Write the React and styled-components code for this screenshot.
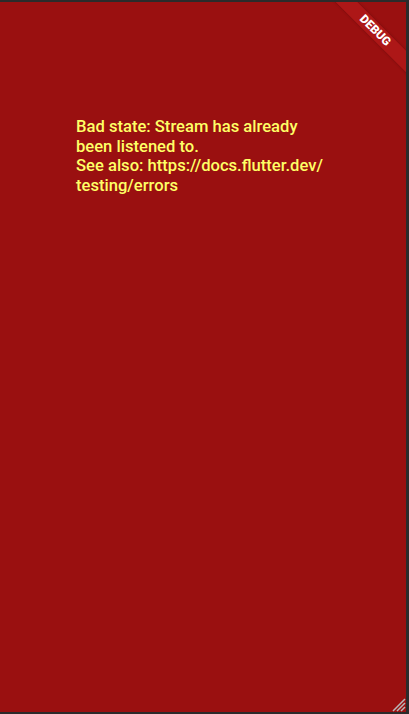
import React from 'react'
import styled, { createGlobalStyle } from 'styled-components'

const Global = createGlobalStyle`
html, body {
    margin: 0;
    padding: 0;
    background: #2b2b2b;
}
`

const Frame = styled.div`
width: 409px;
height: 714px;
box-sizing: border-box;
padding: 2px 3px 2px 0;
background: #2b2b2b;
position: relative;
overflow: hidden;
`

const Screen = styled.div`
position: relative;
height: 100%;
background: #9a1010;
overflow: hidden;
padding: 115px 0 0 76px;
box-sizing: border-box;
`

const Message = styled.p`
margin: 0;
width: 252px;
font-family: Roboto, "Liberation Sans", sans-serif;
font-size: 16.6px;
font-weight: 500;
line-height: 19.5px;
color: #ffff66;
`

const Ribbon = styled.div`
position: absolute;
top: 21px;
right: -29px;
width: 120px;
height: 15px;
transform: rotate(45deg);
background: rgba(183, 28, 28, 0.63);
box-shadow: 0 0 3px rgba(0, 0, 0, 0.3);
display: flex;
align-items: center;
justify-content: center;
font-family: Roboto, "Liberation Sans", sans-serif;
font-size: 12px;
font-weight: 900;
color: #fff;
line-height: 15px;
`

const Grip = styled.svg`
position: absolute;
right: 3px;
bottom: 2px;
`

const App = () => {
    return (
        <>
            <Global />
            <Frame>
                <Screen>
                    <Message>
                        Bad state: Stream has already been listened to.
                        <br />
                        See also: https://docs.flutter.dev/ testing/errors
                    </Message>
                    <Ribbon>DEBUG</Ribbon>
                </Screen>
                <Grip width="14" height="14" viewBox="0 0 14 14">
                    <path d="M13 1 L1 13 M13 5 L5 13 M13 9 L9 13" stroke="#b8b8b8" strokeWidth="1.5" />
                </Grip>
            </Frame>
        </>
    )
}

export default App
